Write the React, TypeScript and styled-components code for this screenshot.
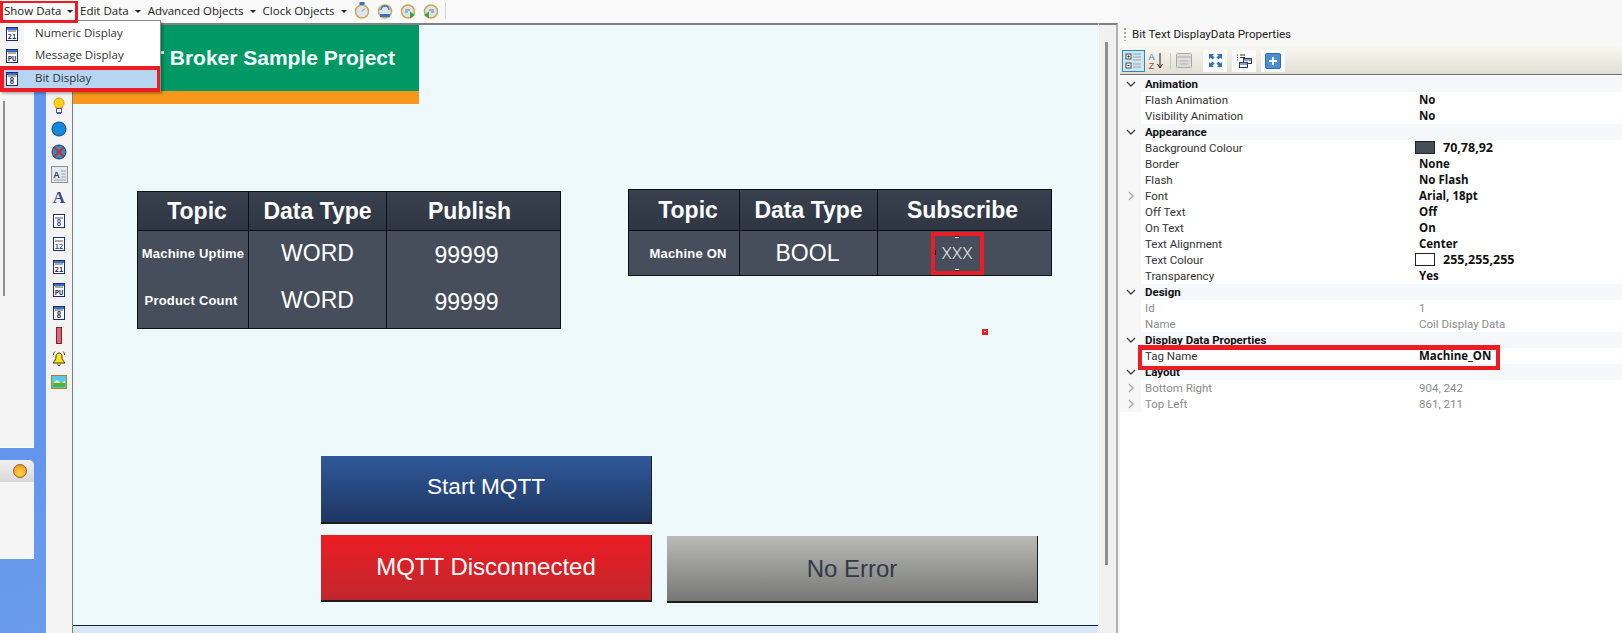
import styled, { createGlobalStyle } from 'styled-components'

const GlobalStyle = createGlobalStyle`
  html, body {
    margin: 0;
    padding: 0;
    background: #f8f8f8;
    overflow: hidden;
  }
  * {
    box-sizing: border-box;
  }
`

const uiFont = `'Open Sans', 'Noto Sans', 'DejaVu Sans', sans-serif`
const gridFont = `Roboto, 'Open Sans', sans-serif`
const hmiFont = `'Liberation Sans', Arial, sans-serif`

/* ---------- small drawings ---------- */

const CalendarIcon = ({ label, light }: { label: string; light?: boolean }) => (
  <svg width="16" height="16" viewBox="0 0 16 16">
    <rect x="2.5" y="1.5" width="11" height="13" fill="#fff" stroke="#1f2f5f" />
    <rect x="3" y="2" width="10" height="2" fill={light ? '#fff' : '#3b6fd0'} />
    <line x1="4" y1="5" x2="12" y2="5" stroke="#555" />
    <text
      x="8"
      y="12.6"
      fontSize={label.length > 1 ? 7 : 8}
      fontFamily="'DejaVu Sans Mono', monospace"
      fontWeight="700"
      textAnchor="middle"
      fill={light ? '#4a4ac0' : '#1f2f5f'}
    >
      {label}
    </text>
  </svg>
)

const BulbIcon = () => (
  <svg width="16" height="18" viewBox="0 0 16 18">
    <path d="M8 1a5 5 0 0 0-5 5c0 2 1.5 3 2 5h6c.5-2 2-3 2-5a5 5 0 0 0-5-5z" fill="#ffd21f" stroke="#d9a300" />
    <rect x="5.5" y="11.5" width="5" height="4" fill="#fff" stroke="#5a4fc0" />
    <line x1="6" y1="16.5" x2="10" y2="16.5" stroke="#5a4fc0" />
  </svg>
)

const LampIcon = ({ crossed }: { crossed?: boolean }) => (
  <svg width="16" height="16" viewBox="0 0 16 16">
    <circle cx="8" cy="8" r="7" fill={crossed ? '#3c86c4' : '#1488dc'} stroke="#14466f" />
    {crossed && <path d="M3 3l10 10M13 3L3 13" stroke="#c43030" strokeWidth="1.8" />}
  </svg>
)

const TextBoxIcon = () => (
  <svg width="17" height="17" viewBox="0 0 17 17">
    <rect x=".5" y=".5" width="16" height="16" fill="#e4e8ee" stroke="#8d939c" />
    <text x="5.5" y="12" fontSize="9" fontWeight="700" fontFamily="'Liberation Sans', sans-serif" textAnchor="middle" fill="#2a3a60">
      A
    </text>
    <path d="M10 5h5M10 8h5M10 11h5M3 14h12" stroke="#9aa0aa" />
  </svg>
)

const BarIcon = () => (
  <svg width="6" height="17" viewBox="0 0 6 17">
    <rect x=".5" y=".5" width="5" height="16" fill="#d86a78" stroke="#8a1f2c" />
  </svg>
)

const BellIcon = () => (
  <svg width="16" height="17" viewBox="0 0 16 17">
    <path d="M8 3c-2.5 0-3 2-3 4 0 2.5-1.5 4-3 6h12c-1.5-2-3-3.5-3-6 0-2-.5-4-3-4z" fill="#ffe31a" stroke="#3a3a10" />
    <path d="M6.5 14.5a1.6 1.6 0 0 0 3 0" fill="#e0b000" stroke="#3a3a10" />
    <path d="M2.5 5c0-1.5.5-2.5 1.5-3.5M13.5 5c0-1.5-.5-2.5-1.5-3.5" fill="none" stroke="#333" />
  </svg>
)

const PictureIcon = () => (
  <svg width="16" height="14" viewBox="0 0 16 14">
    <rect x=".5" y=".5" width="15" height="13" fill="#58c8f0" stroke="#a8861a" />
    <rect x="2" y="7" width="12" height="5" fill="#58b030" />
    <path d="M2 8l4-3 4 3 4-2v2H2z" fill="#f0f0a0" />
  </svg>
)

const ClockIcon = ({ badge }: { badge: 'top' | 'swap' | 'play' | 'back' }) => (
  <svg width="16" height="17" viewBox="0 0 16 17">
    <circle cx="8" cy="9.5" r="6.5" fill="#dfe4ea" stroke="#c9a85a" strokeWidth="1.5" />
    {badge === 'top' && (
      <>
        <rect x="5.5" y="0" width="5" height="3" fill="#2f74c8" />
        <path d="M8 9.5l3-3" stroke="#6d7c90" />
      </>
    )}
    {badge === 'swap' && (
      <>
        <path d="M4 8a4 4 0 0 1 8 0" fill="none" stroke="#2f74c8" strokeWidth="1.5" />
        <path d="M3 12h10v3H3z" fill="#2f74c8" />
      </>
    )}
    {badge === 'play' && (
      <>
        <path d="M5 8h5M5 10h3" stroke="#6d7c90" />
        <path d="M10 9.5l5 3.5-5 3.5z" fill="#3fa535" />
      </>
    )}
    {badge === 'back' && (
      <>
        <path d="M6 8h5M8 10h3" stroke="#6d7c90" />
        <path d="M6 9.5l-5 3.5 5 3.5z" fill="#3fa535" />
      </>
    )}
  </svg>
)

const Chevron = ({ open }: { open?: boolean }) => (
  <svg width="10" height="10" viewBox="0 0 10 10">
    <path
      d={open ? 'M1 3l4 4 4-4' : 'M3 1l4 4-4 4'}
      fill="none"
      stroke={open ? '#444' : '#a8a8a8'}
      strokeWidth="1.4"
    />
  </svg>
)

const CategorizedIcon = () => (
  <svg width="18" height="18" viewBox="0 0 18 18">
    <rect x="1" y="2" width="5" height="5" fill="#fff" stroke="#444" />
    <path d="M2.5 4.5h2M3.5 3.5v2" stroke="#222" />
    <rect x="1" y="11" width="5" height="5" fill="#fff" stroke="#444" />
    <path d="M2.5 13.5h2" stroke="#222" />
    <path d="M8 2h8M8 5h8M8 8h8M8 12h8M8 15h8" stroke="#93a4b2" />
  </svg>
)

const SortIcon = () => (
  <svg width="17" height="18" viewBox="0 0 17 18">
    <text x="4.5" y="8" fontSize="9" fontFamily="'Liberation Sans', sans-serif" textAnchor="middle" fill="#3a6cc0">
      A
    </text>
    <text x="4.5" y="17" fontSize="9" fontFamily="'Liberation Sans', sans-serif" textAnchor="middle" fill="#a05040">
      Z
    </text>
    <path d="M13 1v14M10.5 12l2.5 4 2.5-4" fill="none" stroke="#222" />
  </svg>
)

const PagesIcon = () => (
  <svg width="16" height="15" viewBox="0 0 16 15">
    <rect x=".5" y=".5" width="15" height="14" rx="1" fill="#dcdcdc" stroke="#a8a8a8" />
    <path d="M.5 4h15M4 8h8M4 11h8" stroke="#b0b0b0" />
  </svg>
)

const ExpandIcon = () => (
  <svg width="15" height="15" viewBox="0 0 15 15" fill="#2f74b0">
    <path d="M1 1h5L4.5 2.5 6.5 4.5 4.5 6.5 2.5 4.5 1 6zM14 1v5l-1.5-1.5-2 2-2-2 2-2L9 1zM1 14V9l1.5 1.5 2-2 2 2-2 2L6 14zM14 14H9l1.5-1.5-2-2 2-2 2 2L14 9z" />
  </svg>
)

const WindowsIcon = () => (
  <svg width="16" height="16" viewBox="0 0 16 16" fill="none">
    <path d="M1 2h1M1 4.5h1M1 7h1M4 2h5M4 4.5h5" stroke="#333" />
    <rect x="7.5" y="5.5" width="8" height="5" fill="#fff" stroke="#26406c" />
    <path d="M7.5 7h8" stroke="#26406c" />
    <rect x="3.5" y="9.5" width="8" height="5" fill="#fff" stroke="#26406c" />
    <path d="M3.5 11h8" stroke="#26406c" />
  </svg>
)

const PlusIcon = () => (
  <svg width="16" height="16" viewBox="0 0 16 16">
    <rect x=".5" y=".5" width="15" height="15" rx="1.5" fill="#4a90d0" stroke="#2c6ba8" />
    <path d="M8 4v8M4 8h8" stroke="#fff" strokeWidth="2" />
  </svg>
)

/* ---------- property data ---------- */

type Prop = {
  name: string
  value: string
  expandable?: boolean
  muted?: boolean
  swatch?: string
  marked?: boolean
}

const propertyGroups: { title: string; rows: Prop[] }[] = [
  {
    title: 'Animation',
    rows: [
      { name: 'Flash Animation', value: 'No' },
      { name: 'Visibility Animation', value: 'No' },
    ],
  },
  {
    title: 'Appearance',
    rows: [
      { name: 'Background Colour', value: '70,78,92', swatch: '#464e5c' },
      { name: 'Border', value: 'None' },
      { name: 'Flash', value: 'No Flash' },
      { name: 'Font', value: 'Arial, 18pt', expandable: true },
      { name: 'Off Text', value: 'Off' },
      { name: 'On Text', value: 'On' },
      { name: 'Text Alignment', value: 'Center' },
      { name: 'Text Colour', value: '255,255,255', swatch: '#ffffff' },
      { name: 'Transparency', value: 'Yes' },
    ],
  },
  {
    title: 'Design',
    rows: [
      { name: 'Id', value: '1', muted: true },
      { name: 'Name', value: 'Coil Display Data', muted: true },
    ],
  },
  {
    title: 'Display Data Properties',
    rows: [{ name: 'Tag Name', value: 'Machine_ON', marked: true }],
  },
  {
    title: 'Layout',
    rows: [
      { name: 'Bottom Right', value: '904, 242', muted: true, expandable: true },
      { name: 'Top Left', value: '861, 211', muted: true, expandable: true },
    ],
  },
]

/* ---------- page ---------- */

const App = () => {
  return (
    <Page>
      <GlobalStyle />
      <Main>
        <MenuBar>
          <MenuButton $active>
            Show Data <Caret />
          </MenuButton>
          <MenuButton>
            Edit Data <Caret />
          </MenuButton>
          <MenuButton>
            Advanced Objects <Caret />
          </MenuButton>
          <MenuButton>
            Clock Objects <Caret />
          </MenuButton>
          <ClockGroup>
            <ClockIcon badge="top" />
            <ClockIcon badge="swap" />
            <ClockIcon badge="play" />
            <ClockIcon badge="back" />
          </ClockGroup>
          <BarSeparator />
        </MenuBar>

        <DropMenu>
          <DropItem>
            <CalendarIcon label="21" />
            <DropLabel>Numeric Display</DropLabel>
          </DropItem>
          <DropItem>
            <CalendarIcon label="PU" />
            <DropLabel>Message Display</DropLabel>
          </DropItem>
          <DropItem $picked>
            <CalendarIcon label="8" />
            <DropLabel>Bit Display</DropLabel>
          </DropItem>
        </DropMenu>

        <Workspace>
          <LeftDock>
            <DockPane>
              <DockThumb />
            </DockPane>
            <DockHeader>
              <OrangeBall />
            </DockHeader>
            <DockBody />
          </LeftDock>

          <ToolColumn>
            <ToolSlot>
              <BulbIcon />
            </ToolSlot>
            <ToolSlot>
              <LampIcon />
            </ToolSlot>
            <ToolSlot>
              <LampIcon crossed />
            </ToolSlot>
            <ToolSlot>
              <TextBoxIcon />
            </ToolSlot>
            <ToolSlot>
              <LetterA>A</LetterA>
            </ToolSlot>
            <ToolSlot>
              <CalendarIcon label="8" light />
            </ToolSlot>
            <ToolSlot>
              <CalendarIcon label="12" light />
            </ToolSlot>
            <ToolSlot>
              <CalendarIcon label="21" />
            </ToolSlot>
            <ToolSlot>
              <CalendarIcon label="PU" />
            </ToolSlot>
            <ToolSlot>
              <CalendarIcon label="8" />
            </ToolSlot>
            <ToolSlot>
              <BarIcon />
            </ToolSlot>
            <ToolSlot>
              <BellIcon />
            </ToolSlot>
            <ToolSlot>
              <PictureIcon />
            </ToolSlot>
          </ToolColumn>

          <Canvas>
            <Banner>Broker Sample Project</Banner>
            <BannerStripe />

            <Tables>
              <Table $top={2}>
                <HeadCell $height={39} $shift={4}>
                  Topic
                </HeadCell>
                <HeadCell $height={39}>Data Type</HeadCell>
                <HeadCell $height={39} $shift={-4} $last>
                  Publish
                </HeadCell>
                <TagCell $height={45}>Machine Uptime</TagCell>
                <ValueCell $height={45}>WORD</ValueCell>
                <ValueCell $height={45} $shift={-7} $drop={2} $last>
                  99999
                </ValueCell>
                <TagCell $height={52} $shift={-2} $drop={-2}>
                  Product Count
                </TagCell>
                <ValueCell $height={52} $drop={-2}>
                  WORD
                </ValueCell>
                <ValueCell $height={52} $shift={-7} $last>
                  99999
                </ValueCell>
              </Table>

              <Table $top={0}>
                <HeadCell $height={41} $shift={4}>
                  Topic
                </HeadCell>
                <HeadCell $height={41}>Data Type</HeadCell>
                <HeadCell $height={41} $shift={-2} $last>
                  Subscribe
                </HeadCell>
                <TagCell $height={44} $shift={4}>
                  Machine ON
                </TagCell>
                <ValueCell $height={44} $shift={-1}>
                  BOOL
                </ValueCell>
                <ValueCell $height={44} $last>
                  <PickedValue>
                    XXX
                    <Handle $side="top" />
                    <Handle $side="bottom" />
                    <SideHandle />
                  </PickedValue>
                </ValueCell>
              </Table>
            </Tables>

            <StrayHandle />

            <ButtonRows>
              <HmiButton $tone="blue" $size={22.6} $height={68} $lift={4}>
                Start MQTT
              </HmiButton>
              <ButtonPair>
                <HmiButton $tone="red" $size={24} $height={67} $lift={2}>
                  MQTT Disconnected
                </HmiButton>
                <HmiButton $tone="grey" $size={24} $height={67} $wide>
                  No Error
                </HmiButton>
              </ButtonPair>
            </ButtonRows>

            <CanvasFooter />
          </Canvas>

          <ScrollTrack>
            <ScrollThumb />
          </ScrollTrack>
        </Workspace>
      </Main>

      <PropertyPanel>
        <PanelTitle>
          <Gripper />
          Bit Text DisplayData Properties
        </PanelTitle>
        <PanelTools>
          <ToolToggle>
            <CategorizedIcon />
          </ToolToggle>
          <PlainTool>
            <SortIcon />
          </PlainTool>
          <ToolDivider />
          <PlainTool>
            <PagesIcon />
          </PlainTool>
          <TileTool $first>
            <ExpandIcon />
          </TileTool>
          <TileTool>
            <WindowsIcon />
          </TileTool>
          <TileTool>
            <PlusIcon />
          </TileTool>
        </PanelTools>
        <Grid>
          {propertyGroups.map((group) => (
            <div key={group.title}>
              <SectionRow>
                <Gutter>
                  <Chevron open />
                </Gutter>
                {group.title}
              </SectionRow>
              {group.rows.map((row) => (
                <PropRow key={row.name}>
                  {row.marked && <TagMarker />}
                  <Gutter>{row.expandable && <Chevron />}</Gutter>
                  <PropName $muted={row.muted}>{row.name}</PropName>
                  <PropValue $muted={row.muted} $numeric={!!row.swatch}>
                    {row.swatch && <Swatch $color={row.swatch} />}
                    {row.value}
                  </PropValue>
                </PropRow>
              ))}
            </div>
          ))}
        </Grid>
      </PropertyPanel>
    </Page>
  )
}

export default App

const Page = styled.div`
  display: flex;
  width: 1622px;
  height: 633px;
  overflow: hidden;
  font-family: ${uiFont};
  background: #f8f8f8;
`

const Main = styled.div`
  position: relative;
  display: flex;
  flex-direction: column;
  width: 1120px;
  flex: none;
`

const MenuBar = styled.div`
  display: flex;
  align-items: center;
  height: 23px;
  flex: none;
  background: #f9f9f9;
  font-size: 11.5px;
  color: #222;
`

const MenuButton = styled.div<{ $active?: boolean }>`
  display: flex;
  align-items: center;
  gap: 5px;
  height: 22px;
  padding: 0 2px 3px;
  margin-right: 3px;
  white-space: nowrap;
  ${(props) =>
    props.$active &&
    `
    width: 78px;
    margin-right: 0;
    padding: 0 0 2px 1px;
    border: 3px solid #ed1c24;
    border-top-width: 2px;
    position: relative;
    z-index: 5;
  `}
`

const Caret = styled.span`
  width: 0;
  height: 0;
  margin: 3px 0 0 1px;
  border-left: 3px solid transparent;
  border-right: 3px solid transparent;
  border-top: 3px solid #222;
`

const ClockGroup = styled.div`
  display: flex;
  gap: 7px;
  margin: 0 0 3px 2px;
`

const BarSeparator = styled.div`
  width: 1px;
  height: 17px;
  margin: 0 0 3px 6px;
  background: #d4d4d4;
`

const DropMenu = styled.div`
  position: absolute;
  top: 20px;
  left: 0;
  z-index: 4;
  width: 161px;
  padding-top: 2px;
  background: linear-gradient(to right, #f3f3f3 24px, #ffffff 24px);
  border-right: 1px solid #8a8a8a;
  border-top: 1px solid #8a8a8a;
  box-shadow: 2px 2px 2px rgba(0, 0, 0, 0.25);
  font-size: 11.5px;
  color: #333;
`

const DropItem = styled.div<{ $picked?: boolean }>`
  display: flex;
  align-items: center;
  gap: 15px;
  height: ${(props) => (props.$picked ? '26px' : '22px')};
  padding-left: 4px;
  ${(props) =>
    props.$picked &&
    `
    margin-top: -1px;
    background: #b5d5f0;
    border: 4px solid #ed1c24;
    border-right-width: 3px;
    padding-left: 0;
  `}
`

const DropLabel = styled.span`
  padding-bottom: 3px;
`

const Workspace = styled.div`
  display: flex;
  flex: 1;
  min-height: 0;
`

const LeftDock = styled.div`
  width: 46px;
  flex: none;
  padding-right: 12px;
  background: linear-gradient(160deg, #6495ed 70%, #6a9cea);
`

const DockPane = styled.div`
  height: 425px;
  padding: 78px 0 0 3px;
  background: #f4f4f4;
  border-bottom: 1px solid #ffffff;
`

const DockThumb = styled.div`
  width: 2px;
  height: 195px;
  background: #8f8f8f;
`

const DockHeader = styled.div`
  display: flex;
  align-items: center;
  justify-content: flex-end;
  height: 22px;
  margin-top: 12px;
  padding-right: 7px;
  background: linear-gradient(#f0f0f0, #d8d8d8);
  border-top-right-radius: 5px;
`

const OrangeBall = styled.div`
  width: 14px;
  height: 14px;
  border-radius: 50%;
  background: radial-gradient(circle at 50% 70%, #ffd84a, #ee8a10);
  border: 1px solid #9a5a20;
`

const DockBody = styled.div`
  height: 77px;
  background: #f5f5f5;
  border-bottom: 1px solid #ffffff;
`

const ToolColumn = styled.div`
  display: flex;
  flex-direction: column;
  width: 27px;
  flex: none;
  padding-top: 71px;
  background: #f3f3f3;
  border-right: 1px solid #77807f;
`

const ToolSlot = styled.div`
  display: flex;
  align-items: center;
  justify-content: center;
  height: 23px;
  flex: none;
`

const LetterA = styled.span`
  font-family: 'Liberation Serif', serif;
  font-weight: 700;
  font-size: 17px;
  line-height: 1;
  color: #3d4a86;
`

const Canvas = styled.div`
  position: relative;
  display: flex;
  flex-direction: column;
  width: 1025px;
  flex: none;
  background: #edf9fa;
  border-top: 2px solid #808080;
`

const Banner = styled.div`
  position: relative;
  display: flex;
  align-items: center;
  justify-content: flex-end;
  width: 346px;
  height: 66px;
  flex: none;
  padding-right: 24px;
  background: #009966;
  font-family: ${hmiFont};
  font-weight: 700;
  font-size: 21px;
  color: #f4fffa;
  white-space: nowrap;

  /* tip of the title letter that the open menu covers */
  &::before {
    content: '';
    position: absolute;
    left: 88px;
    top: 26px;
    width: 3px;
    height: 3px;
    background: #f4fffa;
  }
`

const BannerStripe = styled.div`
  width: 346px;
  height: 13px;
  flex: none;
  background: #f7981d;
`

const Tables = styled.div`
  display: flex;
  align-items: flex-start;
  gap: 67px;
  margin: 85px 0 0 64px;
  flex: none;
`

const Table = styled.div<{ $top: number }>`
  display: grid;
  grid-template-columns: 111px 138px 173px;
  margin-top: ${(props) => props.$top}px;
  background: #464e5c;
  border: 1px solid #0b1018;
  font-family: ${hmiFont};
  color: #fff;
`

const HeadCell = styled.div<{ $height: number; $shift?: number; $last?: boolean }>`
  display: flex;
  align-items: center;
  justify-content: center;
  height: ${(props) => props.$height}px;
  padding-left: ${(props) => Math.max(props.$shift ?? 0, 0) * 2}px;
  padding-right: ${(props) => Math.max(-(props.$shift ?? 0), 0) * 2}px;
  background: linear-gradient(#39414f, #2e3644);
  border-bottom: 1px solid #0b1018;
  border-right: ${(props) => (props.$last ? 'none' : '1px solid #0b1018')};
  font-weight: 700;
  font-size: 23px;
`

const TagCell = styled.div<{ $height: number; $shift?: number; $drop?: number }>`
  display: flex;
  align-items: center;
  justify-content: center;
  height: ${(props) => props.$height}px;
  padding-left: ${(props) => Math.max(props.$shift ?? 0, 0) * 2}px;
  padding-right: ${(props) => Math.max(-(props.$shift ?? 0), 0) * 2}px;
  padding-bottom: ${(props) => Math.max(-(props.$drop ?? 0), 0) * 2}px;
  border-right: 1px solid #0b1018;
  font-weight: 700;
  font-size: 13px;
  letter-spacing: 0.2px;
  white-space: nowrap;
`

const ValueCell = styled.div<{
  $height: number
  $shift?: number
  $drop?: number
  $last?: boolean
}>`
  display: flex;
  align-items: center;
  justify-content: center;
  height: ${(props) => props.$height}px;
  padding-right: ${(props) => Math.max(-(props.$shift ?? 0), 0) * 2}px;
  padding-top: ${(props) => Math.max(props.$drop ?? 0, 0) * 2}px;
  padding-bottom: ${(props) => Math.max(-(props.$drop ?? 0), 0) * 2}px;
  border-right: ${(props) => (props.$last ? 'none' : '1px solid #0b1018')};
  font-size: 23px;
`

const PickedValue = styled.div`
  position: relative;
  display: flex;
  align-items: center;
  justify-content: center;
  width: 53px;
  height: 43px;
  margin-right: 15px;
  border: 4px solid #ed1c24;
  font-family: Roboto, sans-serif;
  font-weight: 300;
  font-size: 17px;
  color: #e2e2e2;
`

const Handle = styled.span<{ $side: 'top' | 'bottom' }>`
  position: absolute;
  left: 20px;
  ${(props) => props.$side}: 0;
  width: 4px;
  height: 2px;
  background: #fff;
  border-${(props) => props.$side}: 1px solid #111;
`

const SideHandle = styled.span`
  position: absolute;
  left: 0;
  top: 14px;
  width: 1px;
  height: 5px;
  background: #111;
`

const StrayHandle = styled.div`
  position: absolute;
  left: 909px;
  top: 304px;
  width: 6px;
  height: 6px;
  background: #ed1c24;
  &::after {
    content: '';
    position: absolute;
    left: 2px;
    top: 2px;
    width: 2px;
    height: 1px;
    background: #fff;
  }
`

const ButtonRows = styled.div`
  display: flex;
  flex-direction: column;
  gap: 11px;
  margin: 127px 0 0 248px;
  flex: none;
`

const ButtonPair = styled.div`
  display: flex;
  gap: 15px;
`

const toneFill = {
  blue: 'linear-gradient(#30599a, #1e3763)',
  red: 'linear-gradient(#ed1c24, #c0272d)',
  grey: 'linear-gradient(#b9b9b7, #777777)',
}

const HmiButton = styled.div<{
  $tone: 'blue' | 'red' | 'grey'
  $size: number
  $height: number
  $lift?: number
  $wide?: boolean
}>`
  display: flex;
  align-items: center;
  justify-content: center;
  width: ${(props) => (props.$wide ? 371 : 331)}px;
  height: ${(props) => props.$height}px;
  margin-top: ${(props) => (props.$wide ? 1 : 0)}px;
  padding-bottom: ${(props) => props.$lift ?? 0}px;
  background: ${(props) => toneFill[props.$tone]};
  border-right: 1px solid #1c1c1c;
  border-bottom: 2px solid #1c1c1c;
  font-family: ${hmiFont};
  font-size: ${(props) => props.$size}px;
  color: ${(props) => (props.$tone === 'grey' ? '#333a48' : '#ffffff')};
`

const CanvasFooter = styled.div`
  margin-top: auto;
  height: 8px;
  flex: none;
  background: #d8e6f8;
  border-top: 1px solid #16202c;
`

const ScrollTrack = styled.div`
  width: 20px;
  flex: none;
  padding: 17px 0 0 6px;
  background: #f0f0f0;
  border-top: 2px solid #808080;
  border-left: 1px solid #ffffff;
  border-right: 2px solid #b0b0b0;
`

const ScrollThumb = styled.div`
  width: 3px;
  height: 523px;
  background: #8f8f8f;
`

const PropertyPanel = styled.div`
  display: flex;
  flex-direction: column;
  flex: 1;
  min-width: 0;
`

const PanelTitle = styled.div`
  display: flex;
  align-items: center;
  gap: 6px;
  height: 24px;
  margin-top: 23px;
  padding: 0 0 2px 4px;
  font-family: ${gridFont};
  font-size: 11.6px;
  color: #222;
  flex: none;
`

const Gripper = styled.span`
  width: 2px;
  height: 13px;
  background: repeating-linear-gradient(#aaa 0 2px, transparent 2px 4px);
`

const PanelTools = styled.div`
  display: flex;
  align-items: center;
  height: 27px;
  flex: none;
  padding-left: 2px;
  background: linear-gradient(#f7f6f0, #e2dfd2);
`

const ToolToggle = styled.div`
  display: flex;
  align-items: center;
  justify-content: center;
  width: 23px;
  height: 22px;
  background: #cfe6f2;
  border: 1px solid #2a8ab8;
`

const PlainTool = styled.div`
  display: flex;
  align-items: center;
  justify-content: center;
  width: 20px;
  height: 22px;
`

const ToolDivider = styled.div`
  width: 1px;
  height: 16px;
  margin: 0 3px 0 5px;
  background: #c8c8c0;
`

const TileTool = styled.div<{ $first?: boolean }>`
  display: flex;
  align-items: center;
  justify-content: center;
  width: 24px;
  height: 22px;
  margin-left: ${(props) => (props.$first ? 9 : 5)}px;
  background: #fbfbfb;
`

const Grid = styled.div`
  flex: 1;
  padding-top: 1px;
  background: #ffffff;
  border-top: 1px solid #707070;
  font-family: ${gridFont};
  font-size: 11.5px;
`

const Gutter = styled.span`
  display: flex;
  align-items: center;
  justify-content: center;
  width: 21px;
  height: 16px;
  flex: none;
  margin-right: 4px;
  background: #f7f7f8;
`

const SectionRow = styled.div`
  display: flex;
  align-items: center;
  height: 16px;
  background: #f5f7fb;
  font-weight: 700;
  color: #111;
  white-space: nowrap;
`

const PropRow = styled.div`
  position: relative;
  display: flex;
  align-items: center;
  height: 16px;
`

const TagMarker = styled.div`
  position: absolute;
  left: 18px;
  top: -3px;
  width: 362px;
  height: 25px;
  border: 4px solid #ed1c24;
  border-top-width: 5px;
  z-index: 2;
`

const PropName = styled.span<{ $muted?: boolean }>`
  width: 275px;
  flex: none;
  color: ${(props) => (props.$muted ? '#8c8c8c' : '#333333')};
  white-space: nowrap;
`

const PropValue = styled.span<{ $muted?: boolean; $numeric?: boolean }>`
  display: flex;
  align-items: center;
  gap: 8px;
  margin-left: -1px;
  padding-bottom: ${(props) => (props.$muted ? 0 : 1)}px;
  font-family: ${(props) => (props.$muted ? gridFont : uiFont)};
  font-size: ${(props) => (props.$numeric ? 12.5 : 11.5)}px;
  font-weight: ${(props) => (props.$muted ? 400 : 700)};
  color: ${(props) => (props.$muted ? '#8c8c8c' : '#111111')};
  white-space: nowrap;
`

const Swatch = styled.span<{ $color: string }>`
  width: 20px;
  height: 13px;
  margin-left: -4px;
  background: ${(props) => props.$color};
  border: 1px solid #222;
`
